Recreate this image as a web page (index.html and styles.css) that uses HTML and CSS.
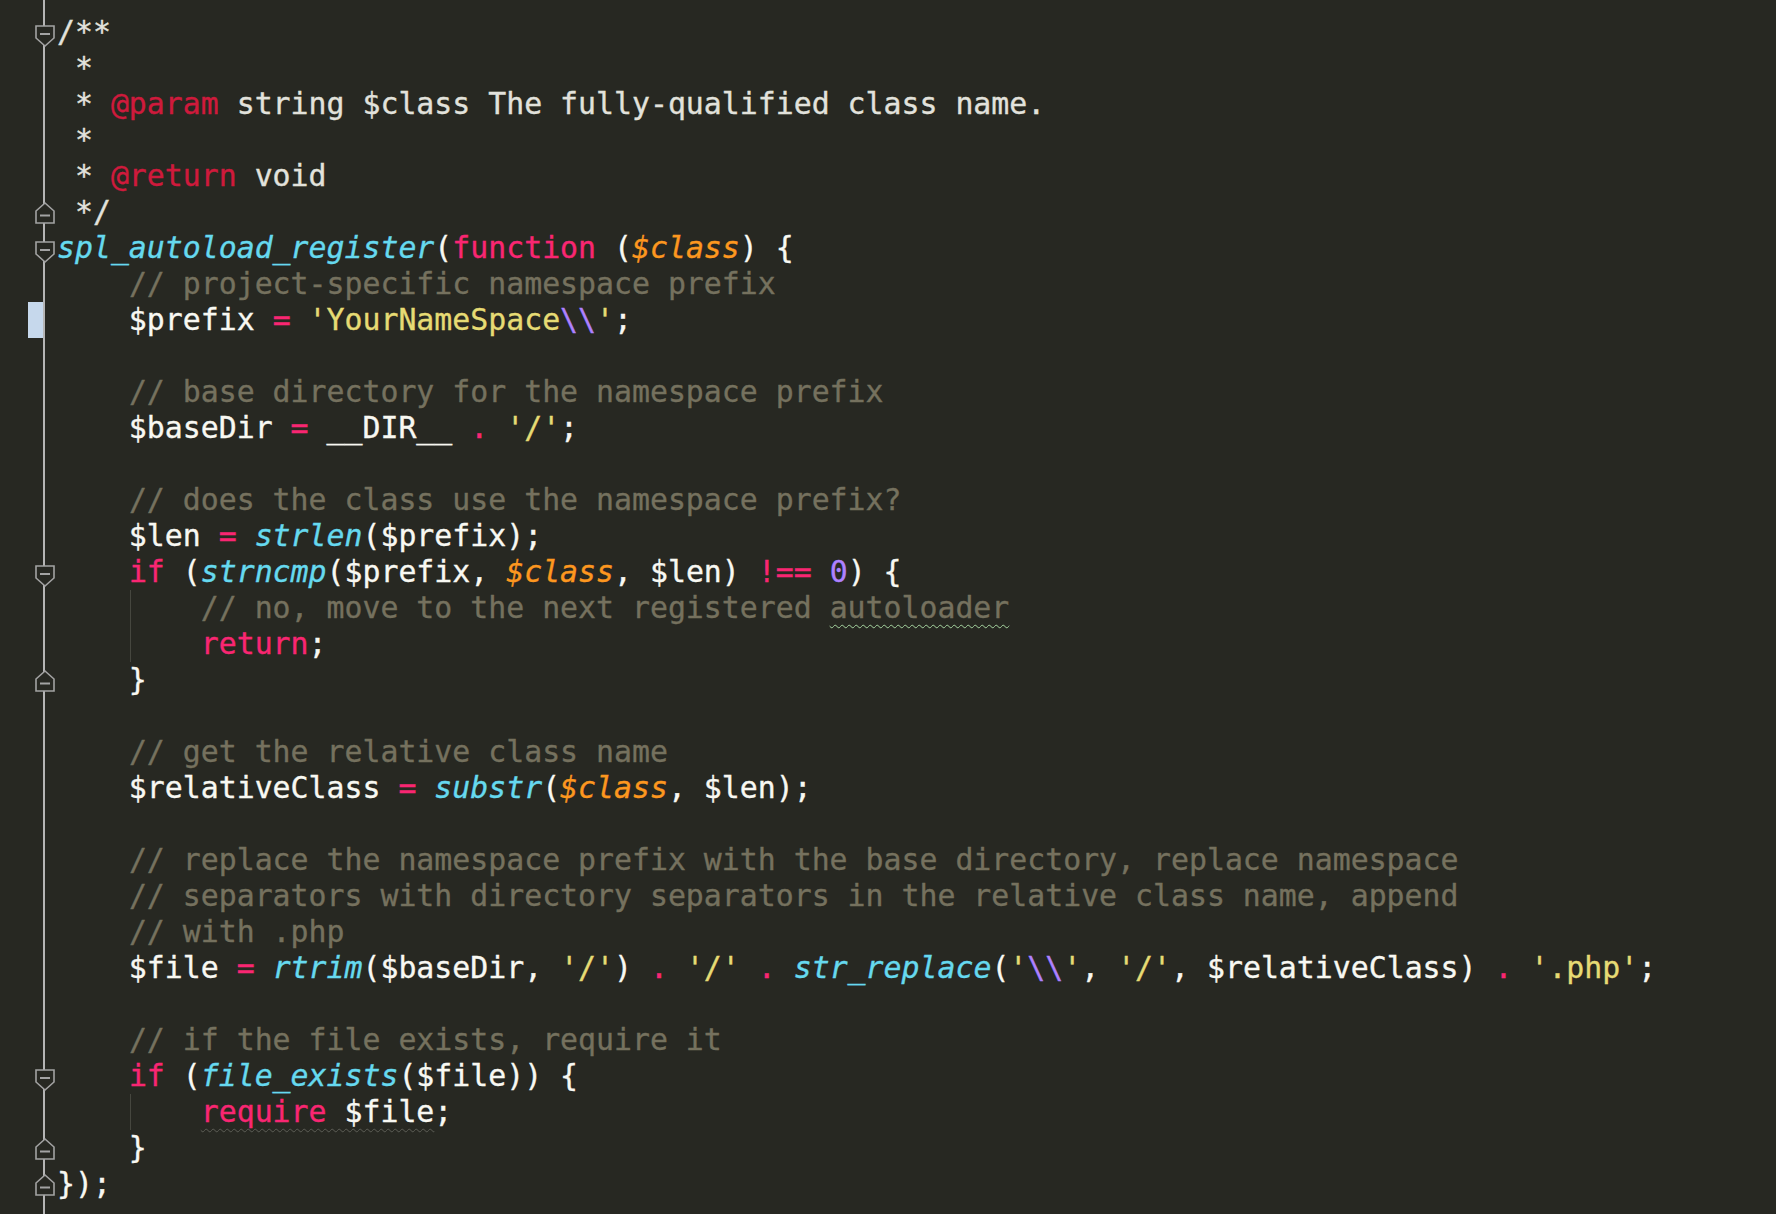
FILE: index.html
```html
<!DOCTYPE html>
<html>
<head>
<meta charset="utf-8">
<link rel="stylesheet" href="styles.css">
</head>
<body>
<div class="editor">
  <div class="row"><div class="gut"><svg class="fold down" viewBox="0 0 20 22"><path d="M1 1H19V13L10 21L1 13Z"/><path class="minus" d="M5 9H15"/></svg></div><div class="code"><span class="d">/**</span></div></div>
  <div class="row"><div class="gut"></div><div class="code"><span class="d"> *</span></div></div>
  <div class="row"><div class="gut"></div><div class="code"><span class="d"> * </span><span class="tag">@param</span><span class="d"> string $class The fully-qualified class name.</span></div></div>
  <div class="row"><div class="gut"></div><div class="code"><span class="d"> *</span></div></div>
  <div class="row"><div class="gut"></div><div class="code"><span class="d"> * </span><span class="tag">@return</span><span class="d"> void</span></div></div>
  <div class="row"><div class="gut"><svg class="fold up" viewBox="0 0 20 22"><path d="M1 21H19V9L10 1L1 9Z"/><path class="minus" d="M5 13.5H15"/></svg></div><div class="code"><span class="d"> */</span></div></div>
  <div class="row"><div class="gut"><svg class="fold down" viewBox="0 0 20 22"><path d="M1 1H19V13L10 21L1 13Z"/><path class="minus" d="M5 9H15"/></svg></div><div class="code"><span class="f">spl_autoload_register</span>(<span class="k">function</span> (<span class="p">$class</span>) {</div></div>
  <div class="row"><div class="gut"></div><div class="code">    <span class="c">// project-specific namespace prefix</span></div></div>
  <div class="row"><div class="gut"><span class="mark"></span></div><div class="code">    $prefix <span class="k">=</span> <span class="s">'YourNameSpace</span><span class="n">\\</span><span class="s">'</span>;</div></div>
  <div class="row"><div class="gut"></div><div class="code"></div></div>
  <div class="row"><div class="gut"></div><div class="code">    <span class="c">// base directory for the namespace prefix</span></div></div>
  <div class="row"><div class="gut"></div><div class="code">    $baseDir <span class="k">=</span> __DIR__ <span class="k">.</span> <span class="s">'/'</span>;</div></div>
  <div class="row"><div class="gut"></div><div class="code"></div></div>
  <div class="row"><div class="gut"></div><div class="code">    <span class="c">// does the class use the namespace prefix?</span></div></div>
  <div class="row"><div class="gut"></div><div class="code">    $len <span class="k">=</span> <span class="f">strlen</span>($prefix);</div></div>
  <div class="row"><div class="gut"><svg class="fold down" viewBox="0 0 20 22"><path d="M1 1H19V13L10 21L1 13Z"/><path class="minus" d="M5 9H15"/></svg></div><div class="code">    <span class="k">if</span> (<span class="f">strncmp</span>($prefix, <span class="p">$class</span>, $len) <span class="k">!==</span> <span class="n">0</span>) {</div></div>
  <div class="row"><div class="gut"></div><div class="code guide">        <span class="c">// no, move to the next registered <span class="sq">autoloader</span></span></div></div>
  <div class="row"><div class="gut"></div><div class="code guide">        <span class="k">return</span>;</div></div>
  <div class="row"><div class="gut"><svg class="fold up" viewBox="0 0 20 22"><path d="M1 21H19V9L10 1L1 9Z"/><path class="minus" d="M5 13.5H15"/></svg></div><div class="code">    }</div></div>
  <div class="row"><div class="gut"></div><div class="code"></div></div>
  <div class="row"><div class="gut"></div><div class="code">    <span class="c">// get the relative class name</span></div></div>
  <div class="row"><div class="gut"></div><div class="code">    $relativeClass <span class="k">=</span> <span class="f">substr</span>(<span class="p">$class</span>, $len);</div></div>
  <div class="row"><div class="gut"></div><div class="code"></div></div>
  <div class="row"><div class="gut"></div><div class="code">    <span class="c">// replace the namespace prefix with the base directory, replace namespace</span></div></div>
  <div class="row"><div class="gut"></div><div class="code">    <span class="c">// separators with directory separators in the relative class name, append</span></div></div>
  <div class="row"><div class="gut"></div><div class="code">    <span class="c">// with .php</span></div></div>
  <div class="row"><div class="gut"></div><div class="code">    $file <span class="k">=</span> <span class="f">rtrim</span>($baseDir, <span class="s">'/'</span>) <span class="k">.</span> <span class="s">'/'</span> <span class="k">.</span> <span class="f">str_replace</span>(<span class="s">'</span><span class="n">\\</span><span class="s">'</span>, <span class="s">'/'</span>, $relativeClass) <span class="k">.</span> <span class="s">'.php'</span>;</div></div>
  <div class="row"><div class="gut"></div><div class="code"></div></div>
  <div class="row"><div class="gut"></div><div class="code">    <span class="c">// if the file exists, require it</span></div></div>
  <div class="row"><div class="gut"><svg class="fold down" viewBox="0 0 20 22"><path d="M1 1H19V13L10 21L1 13Z"/><path class="minus" d="M5 9H15"/></svg></div><div class="code">    <span class="k">if</span> (<span class="f">file_exists</span>($file)) {</div></div>
  <div class="row"><div class="gut"></div><div class="code guide">        <span class="sq2"><span class="k">require</span> $file</span>;</div></div>
  <div class="row"><div class="gut"><svg class="fold up" viewBox="0 0 20 22"><path d="M1 21H19V9L10 1L1 9Z"/><path class="minus" d="M5 13.5H15"/></svg></div><div class="code">    }</div></div>
  <div class="row"><div class="gut"><svg class="fold up" viewBox="0 0 20 22"><path d="M1 21H19V9L10 1L1 9Z"/><path class="minus" d="M5 13.5H15"/></svg></div><div class="code">});</div></div>
</div>
</body>
</html>
```
FILE: styles.css
```css
html, body {
  margin: 0;
  padding: 0;
  background: #272822;
}

.editor {
  min-height: 1214px;
  box-sizing: border-box;
  padding-top: 14px;
  background-image: linear-gradient(#b5b5b5, #b5b5b5);
  background-repeat: no-repeat;
  background-position: 43px 0;
  background-size: 2px 100%;
  font-family: "DejaVu Sans Mono", "Liberation Mono", monospace;
  font-size: 29.85px;
  line-height: 36px;
  color: #f8f8f2;
  -webkit-text-stroke: 0.35px currentColor;
}

.row {
  display: grid;
  grid-template-columns: 57px 1fr;
  height: 36px;
}

.gut {
  display: flex;
  align-items: flex-start;
}

.code {
  white-space: pre;
}

.code.guide {
  background-image: linear-gradient(#46473f, #46473f);
  background-repeat: no-repeat;
  background-position: 73px 0;
  background-size: 1px 100%;
}

.fold {
  width: 20px;
  height: 22px;
  margin-left: 35px;
  overflow: visible;
}

.fold path {
  fill: #272822;
  stroke: #a3a3a3;
  stroke-width: 1.6;
  stroke-linejoin: miter;
}

.fold path.minus {
  fill: none;
  stroke-width: 2;
}

.fold.down {
  margin-top: 11px;
}

.fold.up {
  margin-top: 8px;
}

.mark {
  width: 15px;
  height: 36px;
  margin-left: 28px;
  background: #c6d8ec;
}

.d { color: #e2e2dc; }
.tag { color: #cf1a3c; }
.c { color: #75715e; }
.k { color: #f92672; }
.f { color: #66d9ef; font-style: italic; }
.p { color: #fd971f; font-style: italic; }
.s { color: #e6db74; }
.n { color: #ae81ff; }

.sq {
  text-decoration: underline wavy #a6d5a0;
  text-decoration-thickness: 1px;
  text-underline-offset: 6px;
}

.sq2 {
  text-decoration: underline wavy #5c5d55;
  text-decoration-thickness: 1px;
  text-underline-offset: 6px;
}
```
